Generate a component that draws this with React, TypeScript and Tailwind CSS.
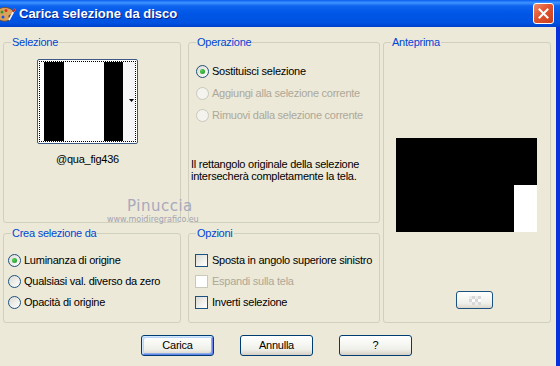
import React from "react";

const FONT = { fontFamily: '"Liberation Sans", Arial, sans-serif' };

function Radio({ checked = false, disabled = false }: { checked?: boolean; disabled?: boolean }) {
  return (
    <span
      className={
        disabled
          ? "w-[13px] h-[13px] rounded-full border border-[#cac8bb] bg-[#f4f3ee] flex items-center justify-center shrink-0"
          : "w-[13px] h-[13px] rounded-full border border-[#1c5180] bg-[linear-gradient(135deg,#dcdbd3,#ffffff)] flex items-center justify-center shrink-0"
      }
    >
      {checked && <span className="w-[5px] h-[5px] rounded-full bg-[radial-gradient(circle_at_35%_35%,#5ad05a,#15921b)]" />}
    </span>
  );
}

function Check({ disabled = false }: { disabled?: boolean }) {
  return (
    <span
      className={
        disabled
          ? "w-[13px] h-[13px] border border-[#cac8bb] bg-white shrink-0"
          : "w-[13px] h-[13px] border border-[#1c5180] bg-[linear-gradient(135deg,#dcdbd3,#ffffff)] shrink-0"
      }
    />
  );
}

function Btn({ label, def = false }: { label: string; def?: boolean }) {
  return (
    <div
      className={
        def
          ? "w-[73px] h-[21px] rounded-[3px] border border-[#003c74] bg-[linear-gradient(to_bottom,#ffffff,#f0f0ea_70%,#d6d0c5)] shadow-[inset_1px_1px_0_#cee7ff,inset_-1px_-1px_0_#6982ee,inset_2px_2px_0_#bcd4f6,inset_-2px_-2px_0_#89ade4] flex items-center justify-center text-[11px] text-black"
          : "w-[73px] h-[21px] rounded-[3px] border border-[#003c74] bg-[linear-gradient(to_bottom,#ffffff,#f0f0ea_70%,#d6d0c5)] flex items-center justify-center text-[11px] text-black"
      }
    >
      {label}
    </div>
  );
}

function Group({ title, className, children }: { title: string; className: string; children?: React.ReactNode }) {
  return (
    <fieldset className={"border border-[#d0d0bf] rounded-[3px] " + className}>
      <legend className="ml-[7px] px-[1px] text-[11px] leading-[13px] text-[#0046d5]">{title}</legend>
      {children}
    </fieldset>
  );
}

export default function App() {
  return (
    <div
      className="w-[560px] h-[366px] bg-[#ece9d8] flex flex-col overflow-hidden tracking-[-0.25px] text-black relative"
      style={FONT}
    >
      {/* Title bar */}
      <div className="h-[27px] shrink-0 flex items-center bg-[linear-gradient(to_bottom,#0a5ff0_0%,#3d93ff_10%,#0e63ef_22%,#0056e6_50%,#0052e0_85%,#0040cc_100%)] relative">
        <svg width="16" height="17" viewBox="0 0 16 17" className="mt-[1px]">
          <path d="M-2 4 C2 0 10 1 13 5 C15 8 12 9 10 9 C8 9 9 12 10 13 C8 16 0 16 -2 12 Z" fill="#d9a25a" stroke="#7a4a1a" strokeWidth="0.8" />
          <circle cx="2" cy="6" r="1.5" fill="#2a9a2a" />
          <circle cx="6" cy="4.5" r="1.5" fill="#e03020" />
          <circle cx="3" cy="11" r="1.5" fill="#2050e0" />
          <path d="M9 14 L15 3" stroke="#f0f0f0" strokeWidth="1.6" />
          <path d="M13 6 L15 3" stroke="#c02020" strokeWidth="1.6" />
        </svg>
        <span className="ml-[3px] text-[13px] font-bold text-white tracking-normal [text-shadow:1px_1px_0_#0a1f8a]">
          Carica selezione da disco
        </span>
        <div className="absolute right-[6px] top-[3px] w-[21px] h-[21px] rounded-[3px] border border-white bg-[linear-gradient(135deg,#f08a6a,#e0542e_45%,#c8401e)] flex items-center justify-center">
          <svg width="11" height="11" viewBox="0 0 11 11">
            <path d="M1.5 1.5 L9.5 9.5 M9.5 1.5 L1.5 9.5" stroke="white" strokeWidth="2" strokeLinecap="square" />
          </svg>
        </div>
      </div>

      {/* Body */}
      <div className="flex-1 flex border-r-[4px] border-[#0831d9]">
        <div className="flex-1 flex flex-col pl-[3px] pt-[9px]">
          <div className="flex">
            {/* Column 1 */}
            <div className="w-[178px] flex flex-col gap-[4px]">
              <Group title="Selezione" className="h-[187px]">
                <div className="ml-[33px] mt-[10px] w-[101px] flex flex-col items-center">
                  <div className="w-[101px] h-[85px] border border-[#3c5a82] rounded-[2px] bg-white p-[1px]">
                    <div className="w-full h-full border border-dotted border-black relative flex">
                      <div className="w-[4px] bg-white" />
                      <div className="w-[20px] bg-black" />
                      <div className="w-[40px] bg-white" />
                      <div className="w-[19px] bg-black" />
                      <div className="flex-1 bg-[#f6f6f6]" />
                      <svg width="5" height="3" viewBox="0 0 5 3" className="absolute right-[1px] top-[37px]">
                        <path d="M0 0 H5 L2.5 3 Z" fill="black" />
                      </svg>
                    </div>
                  </div>
                  <div className="mt-[9px] text-[11px] leading-[13px]">@qua_fig436</div>
                </div>
              </Group>
              <Group title="Crea selezione da" className="h-[96px]">
                <div className="mt-[10px] pl-[4px] flex flex-col">
                  <div className="h-[21px] flex items-center gap-[3px] text-[11px]">
                    <Radio checked />
                    <span>Luminanza di origine</span>
                  </div>
                  <div className="h-[21px] flex items-center gap-[3px] text-[11px]">
                    <Radio />
                    <span>Qualsiasi val. diverso da zero</span>
                  </div>
                  <div className="h-[20px] flex items-center gap-[3px] text-[11px]">
                    <Radio />
                    <span>Opacità di origine</span>
                  </div>
                </div>
              </Group>
            </div>

            {/* Column 2 */}
            <div className="ml-[7px] w-[192px] flex flex-col gap-[4px]">
              <Group title="Operazione" className="h-[187px]">
                <div className="mt-[11px] pl-[7px] flex flex-col">
                  <div className="h-[22px] flex items-center gap-[3px] text-[11px]">
                    <Radio checked />
                    <span>Sostituisci selezione</span>
                  </div>
                  <div className="h-[22px] flex items-center gap-[3px] text-[11px] text-[#aca899]">
                    <Radio disabled />
                    <span>Aggiungi alla selezione corrente</span>
                  </div>
                  <div className="h-[22px] flex items-center gap-[3px] text-[11px] text-[#aca899]">
                    <Radio disabled />
                    <span>Rimuovi dalla selezione corrente</span>
                  </div>
                </div>
                <p className="mt-[32px] pl-[2px] text-[11px] leading-[12px]">
                  Il rettangolo originale della selezione
                  <br />
                  intersecherà completamente la tela.
                </p>
              </Group>
              <Group title="Opzioni" className="h-[96px]">
                <div className="mt-[10px] pl-[6px] flex flex-col">
                  <div className="h-[21px] flex items-center gap-[4px] text-[11px]">
                    <Check />
                    <span>Sposta in angolo superiore sinistro</span>
                  </div>
                  <div className="h-[21px] flex items-center gap-[4px] text-[11px] text-[#aca899]">
                    <Check disabled />
                    <span>Espandi sulla tela</span>
                  </div>
                  <div className="h-[20px] flex items-center gap-[4px] text-[11px]">
                    <Check />
                    <span>Inverti selezione</span>
                  </div>
                </div>
              </Group>
            </div>

            {/* Column 3 */}
            <div className="ml-[3px] w-[168px]">
              <Group title="Anteprima" className="h-[287px]">
                <div className="mt-[89px] ml-[12px] w-[141px] h-[94px] bg-black flex flex-col items-end justify-end">
                  <div className="w-[23px] h-[47px] bg-white" />
                </div>
                <div className="mt-[59px] ml-[72px] w-[37px] h-[18px] rounded-[3px] border border-[#1c5180] bg-[linear-gradient(to_bottom,#ffffff,#f0f0ea_70%,#dcd6cb)] flex items-center justify-center">
                  <div className="grid grid-cols-4 w-[12px] h-[9px]">
                    <div className="bg-[#ededed]" />
                    <div className="bg-[#d8d8d8]" />
                    <div className="bg-[#ededed]" />
                    <div className="bg-[#d8d8d8]" />
                    <div className="bg-[#d8d8d8]" />
                    <div className="bg-[#ffffff]" />
                    <div className="bg-[#d8d8d8]" />
                    <div className="bg-[#ffffff]" />
                    <div className="bg-[#ededed]" />
                    <div className="bg-[#d8d8d8]" />
                    <div className="bg-[#ededed]" />
                    <div className="bg-[#d8d8d8]" />
                  </div>
                </div>
              </Group>
            </div>
          </div>

          {/* Buttons */}
          <div className="flex mt-[12px] pl-[138px] gap-[26px]">
            <Btn label="Carica" def />
            <Btn label="Annulla" />
            <Btn label="?" />
          </div>
        </div>
      </div>

      {/* Watermark overlay */}
      <span
        className="absolute left-[127px] top-[199px] text-[15px] leading-[15px] text-[#a9a8bd] tracking-[0.5px] pointer-events-none"
        style={{ fontFamily: '"DejaVu Sans", sans-serif' }}
      >
        Pinuccia
      </span>
      <span
        className="absolute left-[107px] top-[215px] text-[8px] leading-[9px] text-[#a4a3b3] tracking-normal pointer-events-none"
        style={{ fontFamily: '"DejaVu Sans", sans-serif' }}
      >
        www.moidiregrafico.eu
      </span>
    </div>
  );
}
